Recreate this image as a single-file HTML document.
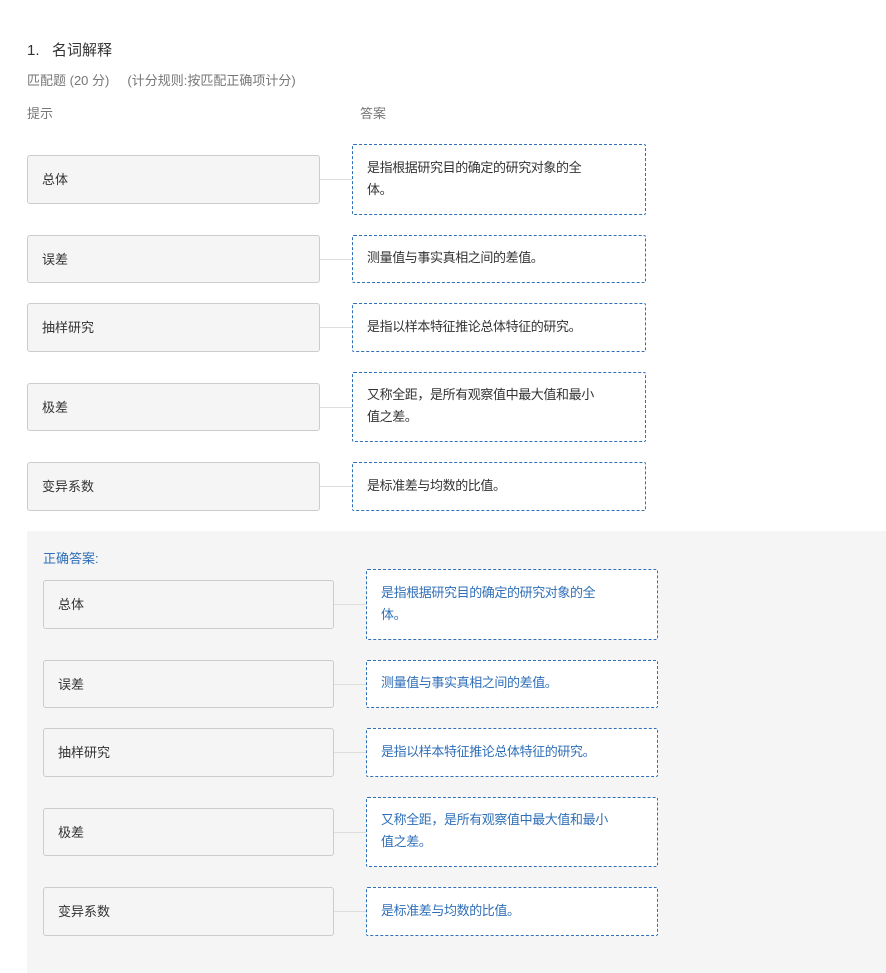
<!DOCTYPE html><html><head><meta charset="utf-8"><style>
body{margin:0;width:886px;height:973px;background:#fff;font-family:"Liberation Sans","Noto Sans CJK SC",sans-serif;position:relative;overflow:hidden;color:#333}
.a{position:absolute;box-sizing:border-box}
.l{background:#f5f5f5;border:1px solid #ccc;border-radius:3px;font-size:13px;padding-left:14px;display:flex;align-items:center;padding-bottom:2px}
.r{background:#fff;border:1px dashed #2f6fb8;border-radius:2px;font-size:13px;padding:0 14px 2px;display:flex;align-items:center;line-height:22px;letter-spacing:-0.4px}
.ln{height:1px;background:#ddd}
.b{color:#2f6fb8}
</style></head><body>
<div class="a" style="left:27px;top:39px;font-size:15px;color:#333">1.&nbsp;&nbsp;&nbsp;名词解释</div>
<div class="a" style="left:27px;top:70px;font-size:13px;color:#777">匹配题 (20 分)&nbsp;&nbsp;&nbsp;&nbsp;&nbsp;(计分规则:按匹配正确项计分)</div>
<div class="a" style="left:27px;top:103px;font-size:13px;color:#777">提示</div>
<div class="a" style="left:360px;top:103px;font-size:13px;color:#777">答案</div>

<div class="a l" style="left:27px;top:155px;width:293px;height:49px">总体</div>
<div class="a ln" style="left:320px;top:179px;width:32px"></div>
<div class="a r" style="left:352px;top:144px;width:294px;height:71px">是指根据研究目的确定的研究对象的全<br>体。</div>

<div class="a l" style="left:27px;top:235px;width:293px;height:48px">误差</div>
<div class="a ln" style="left:320px;top:259px;width:32px"></div>
<div class="a r" style="left:352px;top:235px;width:294px;height:48px">测量值与事实真相之间的差值。</div>

<div class="a l" style="left:27px;top:303px;width:293px;height:49px">抽样研究</div>
<div class="a ln" style="left:320px;top:327px;width:32px"></div>
<div class="a r" style="left:352px;top:303px;width:294px;height:49px">是指以样本特征推论总体特征的研究。</div>

<div class="a l" style="left:27px;top:383px;width:293px;height:48px">极差</div>
<div class="a ln" style="left:320px;top:407px;width:32px"></div>
<div class="a r" style="left:352px;top:372px;width:294px;height:70px">又称全距，是所有观察值中最大值和最小<br>值之差。</div>

<div class="a l" style="left:27px;top:462px;width:293px;height:49px">变异系数</div>
<div class="a ln" style="left:320px;top:486px;width:32px"></div>
<div class="a r" style="left:352px;top:462px;width:294px;height:49px">是标准差与均数的比值。</div>

<div class="a" style="left:27px;top:531px;width:859px;height:442px;background:#f5f5f5"></div>
<div class="a b" style="left:43px;top:548px;font-size:13px">正确答案:</div>

<div class="a l" style="left:43px;top:580px;width:291px;height:49px">总体</div>
<div class="a ln" style="left:334px;top:604px;width:32px"></div>
<div class="a r b" style="left:366px;top:569px;width:292px;height:71px">是指根据研究目的确定的研究对象的全<br>体。</div>

<div class="a l" style="left:43px;top:660px;width:291px;height:48px">误差</div>
<div class="a ln" style="left:334px;top:684px;width:32px"></div>
<div class="a r b" style="left:366px;top:660px;width:292px;height:48px">测量值与事实真相之间的差值。</div>

<div class="a l" style="left:43px;top:728px;width:291px;height:49px">抽样研究</div>
<div class="a ln" style="left:334px;top:752px;width:32px"></div>
<div class="a r b" style="left:366px;top:728px;width:292px;height:49px">是指以样本特征推论总体特征的研究。</div>

<div class="a l" style="left:43px;top:808px;width:291px;height:48px">极差</div>
<div class="a ln" style="left:334px;top:832px;width:32px"></div>
<div class="a r b" style="left:366px;top:797px;width:292px;height:70px">又称全距，是所有观察值中最大值和最小<br>值之差。</div>

<div class="a l" style="left:43px;top:887px;width:291px;height:49px">变异系数</div>
<div class="a ln" style="left:334px;top:911px;width:32px"></div>
<div class="a r b" style="left:366px;top:887px;width:292px;height:49px">是标准差与均数的比值。</div>
</body></html>
